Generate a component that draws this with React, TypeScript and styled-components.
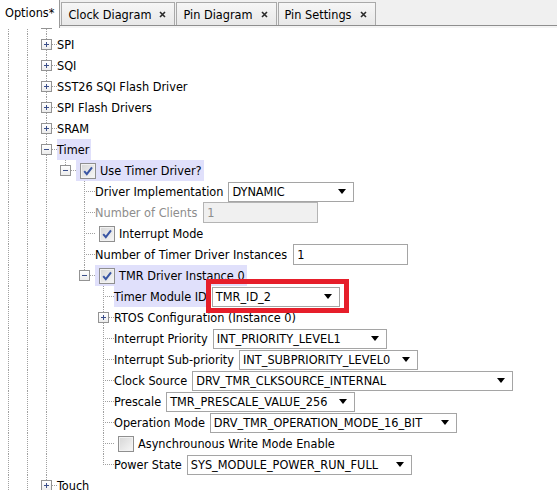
import { useLayoutEffect, useRef } from 'react'
import styled, { createGlobalStyle, css } from 'styled-components'

const GlobalStyle = createGlobalStyle`
  html, body {
    margin: 0;
    padding: 0;
    background: #ffffff;
  }
  body {
    font-family: 'DejaVu Sans Condensed', 'Liberation Sans', sans-serif;
    font-size: 12.6px;
    color: #000000;
  }
`

const Frame = styled.div`
  width: 557px;
  height: 490px;
  display: flex;
  flex-direction: column;
  overflow: hidden;
`

// ---- tabs ----
const TabStrip = styled.div`
  height: 28px;
  flex: none;
  display: flex;
  align-items: flex-end;
  background: #f0f0f0;
  border-bottom: 2px solid #f4f4f4;
  box-sizing: border-box;
  position: relative;
  &::after {
    content: '';
    position: absolute;
    left: 0;
    right: 0;
    bottom: 0;
    height: 1px;
    background: #8e8e8e;
  }
`

const Tab = styled.div<{ $active?: boolean }>`
  display: flex;
  align-items: center;
  gap: 8px;
  box-sizing: border-box;
  white-space: nowrap;
  font-size: 12.6px;
  ${(p) =>
    p.$active
      ? css`
          height: 28px;
          padding: 0 5px 3px 5px;
          background: #ffffff;
          border-right: 1px solid #9a9a9a;
          position: relative;
          z-index: 1;
          margin-bottom: -2px;
        `
      : css`
          height: 23px;
          margin-bottom: 1px;
          margin-left: 1px;
          padding: 0 8px 0 6px;
          background: linear-gradient(#f6f6f6, #e8e8e8);
          border: 1px solid #a9a9a9;
          border-bottom: none;
        `}
`

const CloseIcon = () => (
  <svg width="7" height="7" viewBox="0 0 7 7">
    <path d="M1 1 L6 6 M6 1 L1 6" stroke="#2b2b2b" strokeWidth="1.6" />
  </svg>
)

// ---- tree ----
const Viewport = styled.div`
  flex: 1;
  overflow: hidden;
  background: #ffffff;
`

const Row = styled.div`
  height: 21px;
  display: flex;
  align-items: center;
  white-space: nowrap;
`

const dotsV = css`
  background-image: linear-gradient(to bottom, #a0a0a0 50%, transparent 50%);
  background-size: 1px 2px;
  background-repeat: repeat-y;
`

const Guide = styled.div<{ $line: boolean }>`
  width: 19px;
  height: 21px;
  flex: none;
  ${(p) =>
    p.$line &&
    css`
      ${dotsV};
      background-position: 8px 0;
    `}
`

const Connector = styled.div<{ $last: boolean }>`
  width: 19px;
  height: 21px;
  flex: none;
  position: relative;
  &::before {
    content: '';
    position: absolute;
    left: 8px;
    top: 0;
    width: 1px;
    height: ${(p) => (p.$last ? '11px' : '21px')};
    ${dotsV};
  }
  &::after {
    content: '';
    position: absolute;
    left: 9px;
    top: 10px;
    width: 10px;
    height: 1px;
    background-image: linear-gradient(to right, transparent 50%, #a0a0a0 50%);
    background-size: 2px 1px;
  }
`

const Handle = styled.div`
  position: absolute;
  left: 3px;
  top: 5px;
  width: 9px;
  height: 9px;
  border: 1px solid #939393;
  background: linear-gradient(#ffffff, #ececec);
  z-index: 1;
  display: flex;
  align-items: center;
  justify-content: center;
`

const HandleIcon = ({ open }: { open: boolean }) => (
  <svg width="9" height="9" viewBox="0 0 9 9">
    <path d={open ? 'M2 4.5 H7' : 'M2 4.5 H7 M4.5 2 V7'} stroke="#3b4f8a" strokeWidth="1" />
  </svg>
)

const Cell = styled.div<{ $hl?: boolean; $check?: boolean }>`
  height: 21px;
  display: flex;
  align-items: center;
  gap: 4px;
  padding-left: ${(p) => (p.$check ? '4px' : '0')};
  padding-right: 2px;
  box-sizing: border-box;
  background: ${(p) => (p.$hl ? '#e0e0fb' : 'transparent')};
`

const Label = styled.span<{ $disabled?: boolean }>`
  color: ${(p) => (p.$disabled ? '#8d8d8d' : '#000000')};
  line-height: 21px;
`

const CheckBox = styled.div<{ $on: boolean }>`
  width: 14px;
  height: 14px;
  flex: none;
  border: 1px solid #8f8f8f;
  background: linear-gradient(135deg, #d6d6d6, #f7f7f7);
  box-shadow: inset 0 0 0 1px #f2f2f2;
  display: flex;
  align-items: center;
  justify-content: center;
`

const CheckMark = () => (
  <svg width="12" height="12" viewBox="0 0 12 12">
    <path d="M2.2 6.2 L4.8 9.2 L10 2.4" fill="none" stroke="#3a56a4" strokeWidth="2" />
  </svg>
)

const Combo = styled.div<{ $w: number }>`
  width: ${(p) => p.$w}px;
  height: 20px;
  margin-left: 3px;
  box-sizing: border-box;
  border: 1px solid #a5a5a5;
  background: #ffffff;
  display: flex;
  align-items: center;
  padding-left: 3px;
  padding-right: 7px;
  position: relative;
`

const ComboText = styled.span`
  flex: 1;
  line-height: 18px;
`

const Arrow = styled.span`
  width: 0;
  height: 0;
  border-left: 4.5px solid transparent;
  border-right: 4.5px solid transparent;
  border-top: 5px solid #000000;
`

const Field = styled.div<{ $disabled?: boolean }>`
  width: 115px;
  height: 21px;
  margin-left: 4px;
  box-sizing: border-box;
  border: 1px solid ${(p) => (p.$disabled ? '#b4b4b4' : '#a5a5a5')};
  background: ${(p) => (p.$disabled ? '#f0f0f0' : '#ffffff')};
  color: ${(p) => (p.$disabled ? '#8d8d8d' : '#000000')};
  padding-left: 3px;
  line-height: 19px;
`

const Callout = styled.div`
  position: absolute;
  left: -7px;
  right: -10px;
  top: -9px;
  bottom: -7px;
  border: 5px solid #e61e2a;
  pointer-events: none;
`

type Item = {
  label: string
  guides: boolean[]
  last?: boolean
  handle?: 'open' | 'closed'
  check?: boolean
  hl?: boolean
  disabled?: boolean
  combo?: { value: string; width: number; callout?: boolean }
  field?: { value: string; disabled?: boolean }
}

const L1 = [true, true]
const L2 = [true, true, true]
const L3 = [true, true, true, false]
const L4 = [true, true, true, false, false]

const items: Item[] = [
  { label: '', guides: L1, handle: 'closed' },
  { label: 'SPI', guides: L1, handle: 'closed' },
  { label: 'SQI', guides: L1, handle: 'closed' },
  { label: 'SST26 SQI Flash Driver', guides: L1, handle: 'closed' },
  { label: 'SPI Flash Drivers', guides: L1, handle: 'closed' },
  { label: 'SRAM', guides: L1, handle: 'closed' },
  { label: 'Timer', guides: L1, handle: 'open', hl: true },
  { label: 'Use Timer Driver?', guides: L2, last: true, handle: 'open', check: true, hl: true },
  { label: 'Driver Implementation', guides: L3, combo: { value: 'DYNAMIC', width: 126 } },
  { label: 'Number of Clients', guides: L3, disabled: true, field: { value: '1', disabled: true } },
  { label: 'Interrupt Mode', guides: L3, check: true },
  { label: 'Number of Timer Driver Instances', guides: L3, field: { value: '1' } },
  { label: 'TMR Driver Instance 0', guides: L3, last: true, handle: 'open', check: true, hl: true },
  { label: 'Timer Module ID', guides: L4, hl: true, combo: { value: 'TMR_ID_2', width: 128, callout: true } },
  { label: 'RTOS Configuration (Instance 0)', guides: L4, handle: 'closed' },
  { label: 'Interrupt Priority', guides: L4, combo: { value: 'INT_PRIORITY_LEVEL1', width: 174 } },
  { label: 'Interrupt Sub-priority', guides: L4, combo: { value: 'INT_SUBPRIORITY_LEVEL0', width: 179 } },
  { label: 'Clock Source', guides: L4, combo: { value: 'DRV_TMR_CLKSOURCE_INTERNAL', width: 321 } },
  { label: 'Prescale', guides: L4, combo: { value: 'TMR_PRESCALE_VALUE_256', width: 189 } },
  { label: 'Operation Mode', guides: L4, combo: { value: 'DRV_TMR_OPERATION_MODE_16_BIT', width: 247 } },
  { label: 'Asynchrounous Write Mode Enable', guides: L4, check: false },
  { label: 'Power State', guides: L4, last: true, combo: { value: 'SYS_MODULE_POWER_RUN_FULL', width: 225 } },
  { label: 'Touch', guides: L1, handle: 'closed' },
]

const TreeRow = ({ item }: { item: Item }) => (
  <Row>
    {item.guides.map((g, i) => (
      <Guide key={i} $line={g} />
    ))}
    <Connector $last={!!item.last}>
      {item.handle && (
        <Handle>
          <HandleIcon open={item.handle === 'open'} />
        </Handle>
      )}
    </Connector>
    <Cell $hl={item.hl} $check={item.check !== undefined}>
      {item.check !== undefined && <CheckBox $on={item.check}>{item.check && <CheckMark />}</CheckBox>}
      {item.label && <Label $disabled={item.disabled}>{item.label}</Label>}
    </Cell>
    {item.combo && (
      <Combo $w={item.combo.width}>
        <ComboText>{item.combo.value}</ComboText>
        <Arrow />
        {item.combo.callout && <Callout />}
      </Combo>
    )}
    {item.field && <Field $disabled={item.field.disabled}>{item.field.value}</Field>}
  </Row>
)

export default function App() {
  const view = useRef<HTMLDivElement>(null)

  useLayoutEffect(() => {
    // the tree is scrolled a little way down, as in the IDE
    if (view.current) view.current.scrollTop = 15
  }, [])

  return (
    <Frame>
      <GlobalStyle />
      <TabStrip>
        <Tab $active>Options*</Tab>
        <Tab>
          Clock Diagram <CloseIcon />
        </Tab>
        <Tab>
          Pin Diagram <CloseIcon />
        </Tab>
        <Tab>
          Pin Settings <CloseIcon />
        </Tab>
      </TabStrip>
      <Viewport ref={view}>
        {items.map((item, i) => (
          <TreeRow key={i} item={item} />
        ))}
      </Viewport>
    </Frame>
  )
}
